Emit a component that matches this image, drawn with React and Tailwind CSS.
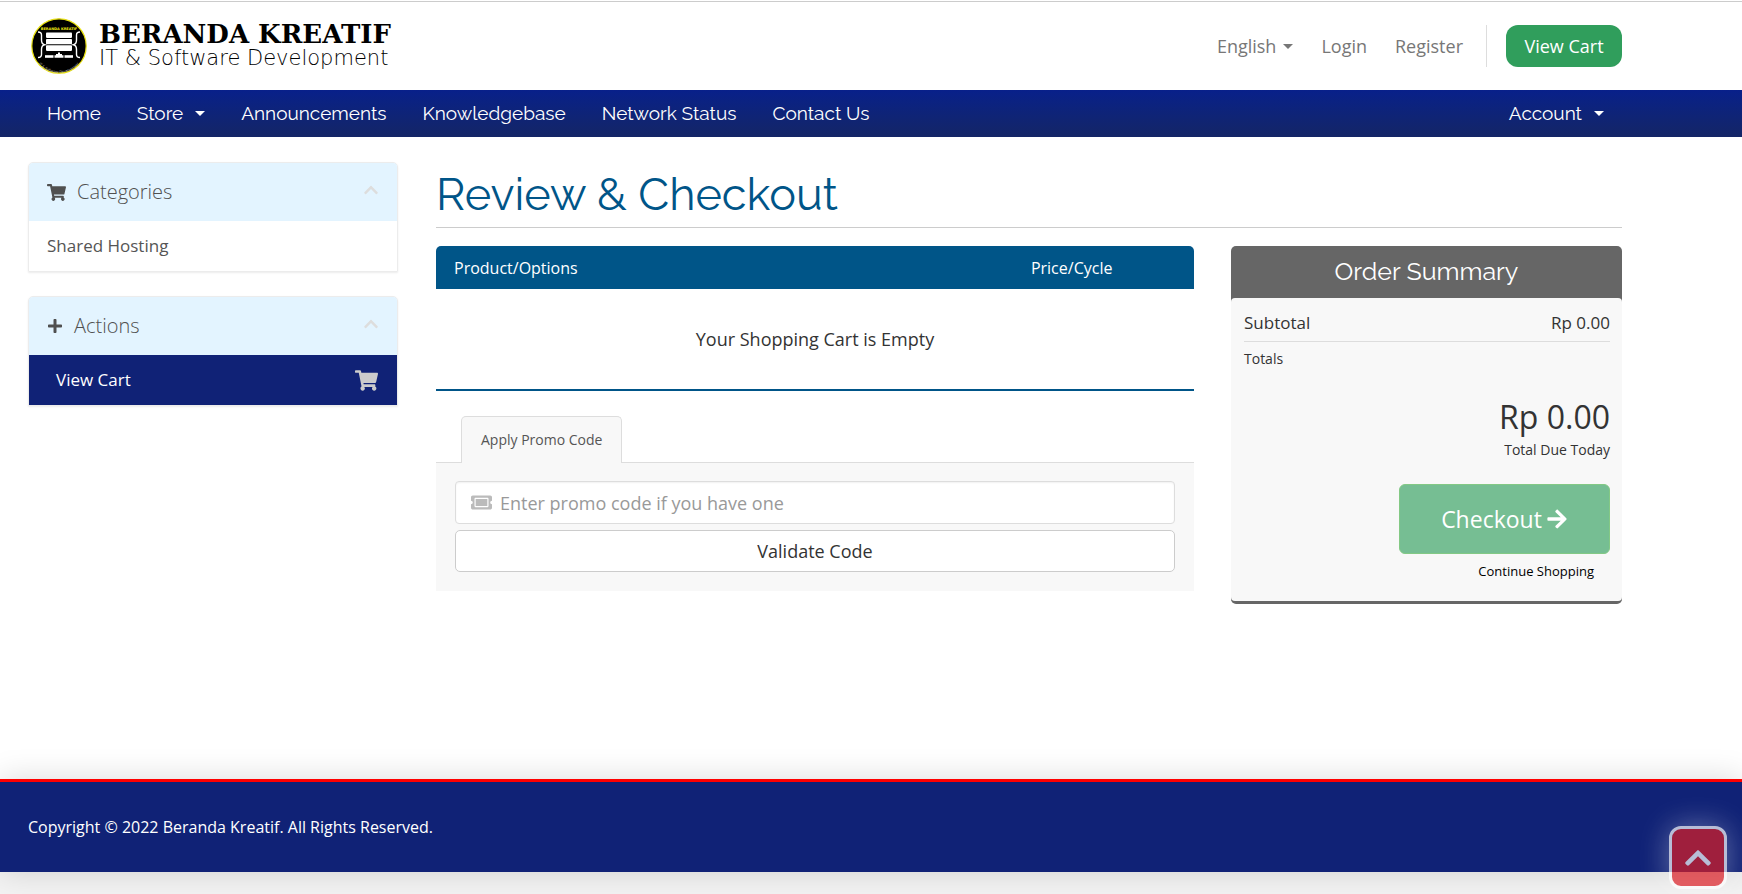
import React from "react";
import {
  FaShoppingCart,
  FaPlus,
  FaChevronUp,
  FaTicketAlt,
  FaArrowRight,
} from "react-icons/fa";

function Caret() {
  return (
    <svg viewBox="0 0 10 5" className="h-[5px] w-[10px]" fill="currentColor" aria-hidden="true">
      <path d="M0 0h10L5 5z" />
    </svg>
  );
}

function Emblem() {
  return (
    <svg viewBox="0 0 56 56" className="size-14 shrink-0" aria-hidden="true">
      <circle cx="28" cy="28" r="27.2" fill="#000" stroke="#e8e010" strokeWidth="1.2" />
      <defs>
        <path id="lower-arc" d="M2.5 36 A26.6 26.6 0 0 0 53.5 36" />
      </defs>
      <text
        x="28"
        y="12.2"
        textAnchor="middle"
        fill="#f5ee10"
        fontSize="3.5"
        fontWeight="bold"
        fontFamily="DejaVu Sans, sans-serif"
      >
        BERANDA KREATIF
      </text>
      <text fill="#bbb" fontSize="3.3" fontFamily="DejaVu Sans, sans-serif">
        <textPath href="#lower-arc" startOffset="50%" textAnchor="middle">
          IT &amp; Software Development
        </textPath>
      </text>
      <g fill="none" stroke="#fff" strokeWidth="1.4">
        <path d="M7 14q3.500 0 3.500 3v5q0 4 3 4.800q-3 .8-3 4.700v5q0 3-3.500 3" />
        <path d="M49 14q-3.500 0-3.500 3v5q0 4-3 4.800q3 .8 3 4.700v5q0 3 3.500 3" />
      </g>
      <g fill="#fff">
        <rect x="15" y="14.5" width="26" height="5.4" rx="0.8" />
        <rect x="15" y="20.9" width="26" height="5.4" rx="0.8" />
        <rect x="15" y="27.3" width="26" height="5.6" rx="0.8" />
        <rect x="14" y="37.2" width="8.500" height="2.600" />
        <rect x="33.500" y="37.200" width="8.500" height="2.600" />
        <path d="M27 34.500h2v1.500h2v1.200h1.500v2.600h-9v-2.600H25V36h2z" />
      </g>
    </svg>
  );
}

const navItems = [
  { label: "Home" },
  { label: "Store", menu: true },
  { label: "Announcements" },
  { label: "Knowledgebase" },
  { label: "Network Status" },
  { label: "Contact Us" },
];

function SidePanel({ icon, title, children }) {
  return (
    <section className="overflow-hidden rounded-t-[5px] border border-[#ececec] shadow-[0_1px_2px_rgba(0,0,0,0.08)]">
      <div className="flex h-[58px] items-center bg-[#e3f4ff] px-[18px] text-[#505050]">
        {icon}
        <h2 className="ml-[11px] grow text-xl font-light">{title}</h2>
        <button type="button" aria-label={"Collapse " + title} className="pb-1 text-[#ddd]">
          <FaChevronUp className="size-4" />
        </button>
      </div>
      {children}
    </section>
  );
}

export default function App() {
  return (
    <div className="flex min-h-screen flex-col bg-[#f3f3f3] font-['Open_Sans',sans-serif] text-[#333]">
      <div className="flex grow flex-col bg-white">
        <header className="mt-px flex h-[89px] items-center justify-between border-t border-[#ccc] pr-[120px] pl-[31px]">
          <a href="#home" className="flex items-center gap-3 text-black">
            <Emblem />
            <span className="flex flex-col whitespace-nowrap">
              <span className="font-['DejaVu_Serif',serif] text-[26px] leading-6 font-bold">
                BERANDA KREATIF
              </span>
              <span className="font-['DejaVu_Sans',sans-serif] text-[21px] leading-6 font-extralight">
                IT &amp; Software Development
              </span>
            </span>
          </a>
          <div className="flex items-center text-lg text-[#777]">
            <button type="button" className="flex items-center gap-[7px]">
              English <Caret />
            </button>
            <a href="#login" className="ml-7">Login</a>
            <a href="#register" className="ml-7">Register</a>
            <span className="ml-[23px] h-[42px] w-px bg-[#ddd]" />
            <a
              href="#cart"
              className="ml-[19px] flex h-[42px] w-[116px] items-center justify-center rounded-xl bg-[#309e5c] text-white"
            >
              View Cart
            </a>
          </div>
        </header>

        <nav className="flex h-[47px] items-center justify-between bg-gradient-to-b from-[#08208a] to-[#142566] pr-[138px] pl-[47px] font-['Raleway','Lato',sans-serif] text-[19px] text-white">
          <ul className="flex items-center gap-9">
            {navItems.map((item) => (
              <li key={item.label}>
                <a href="#nav" className="flex items-center gap-3">
                  {item.label}
                  {item.menu && <Caret />}
                </a>
              </li>
            ))}
          </ul>
          <button type="button" className="flex items-center gap-3">
            Account <Caret />
          </button>
        </nav>

        <div className="flex grow items-start gap-[38px] pt-6 pr-[120px] pb-[174px] pl-7">
          <aside className="flex w-[370px] shrink-0 flex-col gap-6 pt-px">
            <SidePanel icon={<FaShoppingCart className="size-[19px]" />} title="Categories">
              <a href="#shared" className="flex h-[50px] items-center px-[18px] text-[17px] text-[#555]">
                Shared Hosting
              </a>
            </SidePanel>
            <SidePanel icon={<FaPlus className="size-4" />} title="Actions">
              <a
                href="#cart"
                className="flex h-[50px] items-center justify-between bg-[#102276] pr-[19px] pl-[27px] text-[17px] text-white"
              >
                View Cart
                <FaShoppingCart className="size-[23px] text-[#ccc]" />
              </a>
            </SidePanel>
          </aside>

          <main className="min-w-0 grow">
            <h1 className="h-[67px] border-b border-[#ccc] font-['Raleway','Lato',sans-serif] text-[45px] leading-[68px] text-[#005588]">
              Review &amp; Checkout
            </h1>
            <div className="mt-[18px] flex items-start gap-[37px]">
              <div className="min-w-0 grow">
                <table className="w-full table-fixed border-b-2 border-[#005588]">
                  <thead className="text-base text-white">
                    <tr className="h-[43px]">
                      <th className="w-2/3 rounded-tl-[5px] bg-[#005588] pl-[18px] text-left font-normal">
                        Product/Options
                      </th>
                      <th className="rounded-tr-[5px] bg-[#005588] pl-2 text-center font-normal">
                        Price/Cycle
                      </th>
                    </tr>
                  </thead>
                  <tbody>
                    <tr className="h-[101px]">
                      <td colSpan={2} className="text-center text-lg">
                        Your Shopping Cart is Empty
                      </td>
                    </tr>
                  </tbody>
                </table>

                <div className="mt-[25px] flex pl-[25px]">
                  <button
                    type="button"
                    className="z-10 -mb-px h-[47px] rounded-t-[5px] border border-b-0 border-[#ddd] bg-[#f8f8f8] px-[19px] text-sm text-[#555]"
                  >
                    Apply Promo Code
                  </button>
                </div>
                <form className="flex flex-col gap-1.5 border-t border-[#ddd] bg-[#f8f8f8] px-[19px] pt-[18px] pb-[19px]">
                  <label className="flex h-[43px] items-center gap-2 rounded-[4px] border border-[#ddd] bg-white px-[15px] shadow-[inset_0_1px_2px_rgba(0,0,0,0.06)]">
                    <FaTicketAlt className="size-[21px] text-[#bbb]" />
                    <input
                      type="text"
                      aria-label="Promo code"
                      placeholder="Enter promo code if you have one"
                      className="min-w-0 grow text-lg outline-none placeholder:text-[#999]"
                    />
                  </label>
                  <button
                    type="button"
                    className="h-[42px] rounded-[5px] border border-[#ccc] bg-white text-lg"
                  >
                    Validate Code
                  </button>
                </form>
              </div>

              <section className="w-[391px] shrink-0 rounded-[5px] border-b-[3px] border-[#666] bg-[#666]">
                <h2 className="flex h-[52px] items-center justify-center font-['Raleway','Lato',sans-serif] text-[25px] text-white">
                  Order Summary
                </h2>
                <div className="flex flex-col rounded-[4px] bg-[#f8f8f8] pt-2 pr-3 pb-5 pl-[13px]">
                  <div className="flex h-9 items-start justify-between border-b border-[#ddd] text-[17px] leading-[34px]">
                    <span>Subtotal</span>
                    <span>Rp 0.00</span>
                  </div>
                  <p className="mt-[7px] text-sm leading-5">Totals</p>
                  <p className="mt-7 text-right text-[32px] leading-10">Rp 0.00</p>
                  <p className="mt-[3px] text-right text-sm leading-5">
                    Total Due Today
                  </p>
                  <button
                    type="button"
                    className="mt-6 flex h-[70px] w-[211px] items-center justify-center gap-1 self-end rounded-md border border-[#83c985] bg-[#76be93] text-[23px] text-white"
                  >
                    Checkout
                    <FaArrowRight className="size-[22px]" />
                  </button>
                  <a
                    href="#store"
                    className="mt-[7px] self-end pr-4 text-[13px] leading-5 text-black"
                  >
                    Continue Shopping
                  </a>
                </div>
              </section>
            </div>
          </main>
        </div>
      </div>

      <footer className="relative mb-[22px] flex h-[93px] items-center border-t-[3px] border-[#f00] bg-[#102276] px-7 text-base text-white shadow-[0_0_30px_rgba(0,0,0,0.15)]">
        Copyright © 2022 Beranda Kreatif. All Rights Reserved.
      </footer>

      <button
        type="button"
        aria-label="Back to top"
        className="fixed right-[15px] bottom-[5px] flex h-[63px] w-[58px] items-center justify-center rounded-xl border-[3px] border-white bg-[#dd1f26] opacity-70 shadow-[0_0_30px_rgba(255,255,255,0.5)]"
      >
        <FaChevronUp className="size-[30px] text-white" />
      </button>
    </div>
  );
}
